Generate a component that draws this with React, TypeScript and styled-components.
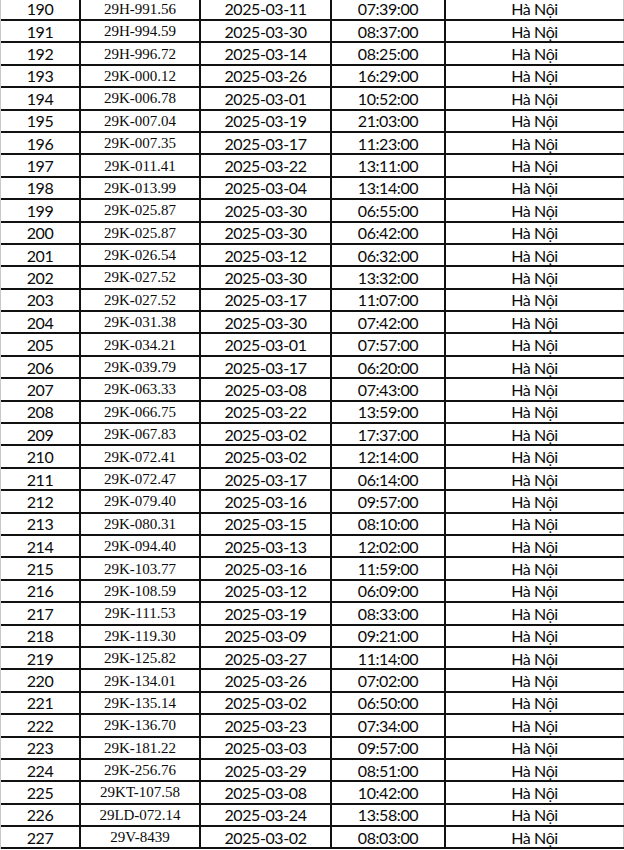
import React from "react";
import styled, { createGlobalStyle } from "styled-components";

const GlobalStyle = createGlobalStyle`
  html, body {
    margin: 0;
    padding: 0;
    background: #fff;
    overflow: hidden;
  }
`;

const Table = styled.div`
  width: 624px;
  margin-top: -1.4px;
  border-left: 1px solid #c8c8c8;
  box-sizing: border-box;
`;

const Row = styled.div`
  display: grid;
  grid-template-columns: 80px 120px 131px 114px 1fr;
  height: 22.4px;
  border-bottom: 2px solid #111;
  box-sizing: border-box;
`;

const Cell = styled.div<{ $serif?: boolean; $last?: boolean }>`
  display: flex;
  align-items: center;
  justify-content: center;
  border-right: ${(p) => (p.$last ? "1px solid #d0d0d0" : "2px solid #111")};
  color: #0a0a0a;
  font-family: ${(p) =>
    p.$serif ? '"Liberation Serif", "Times New Roman", serif' : "Lato, \"Open Sans\", sans-serif"};
  font-size: ${(p) => (p.$serif ? "15px" : "16px")};
  letter-spacing: ${(p) => (p.$serif ? "0" : "-0.4px")};
  line-height: 1;
  white-space: nowrap;
  padding-top: 1px;
`;

const rows: [number, string, string, string][] = [
  [190, "29H-991.56", "2025-03-11", "07:39:00"],
  [191, "29H-994.59", "2025-03-30", "08:37:00"],
  [192, "29H-996.72", "2025-03-14", "08:25:00"],
  [193, "29K-000.12", "2025-03-26", "16:29:00"],
  [194, "29K-006.78", "2025-03-01", "10:52:00"],
  [195, "29K-007.04", "2025-03-19", "21:03:00"],
  [196, "29K-007.35", "2025-03-17", "11:23:00"],
  [197, "29K-011.41", "2025-03-22", "13:11:00"],
  [198, "29K-013.99", "2025-03-04", "13:14:00"],
  [199, "29K-025.87", "2025-03-30", "06:55:00"],
  [200, "29K-025.87", "2025-03-30", "06:42:00"],
  [201, "29K-026.54", "2025-03-12", "06:32:00"],
  [202, "29K-027.52", "2025-03-30", "13:32:00"],
  [203, "29K-027.52", "2025-03-17", "11:07:00"],
  [204, "29K-031.38", "2025-03-30", "07:42:00"],
  [205, "29K-034.21", "2025-03-01", "07:57:00"],
  [206, "29K-039.79", "2025-03-17", "06:20:00"],
  [207, "29K-063.33", "2025-03-08", "07:43:00"],
  [208, "29K-066.75", "2025-03-22", "13:59:00"],
  [209, "29K-067.83", "2025-03-02", "17:37:00"],
  [210, "29K-072.41", "2025-03-02", "12:14:00"],
  [211, "29K-072.47", "2025-03-17", "06:14:00"],
  [212, "29K-079.40", "2025-03-16", "09:57:00"],
  [213, "29K-080.31", "2025-03-15", "08:10:00"],
  [214, "29K-094.40", "2025-03-13", "12:02:00"],
  [215, "29K-103.77", "2025-03-16", "11:59:00"],
  [216, "29K-108.59", "2025-03-12", "06:09:00"],
  [217, "29K-111.53", "2025-03-19", "08:33:00"],
  [218, "29K-119.30", "2025-03-09", "09:21:00"],
  [219, "29K-125.82", "2025-03-27", "11:14:00"],
  [220, "29K-134.01", "2025-03-26", "07:02:00"],
  [221, "29K-135.14", "2025-03-02", "06:50:00"],
  [222, "29K-136.70", "2025-03-23", "07:34:00"],
  [223, "29K-181.22", "2025-03-03", "09:57:00"],
  [224, "29K-256.76", "2025-03-29", "08:51:00"],
  [225, "29KT-107.58", "2025-03-08", "10:42:00"],
  [226, "29LD-072.14", "2025-03-24", "13:58:00"],
  [227, "29V-8439", "2025-03-02", "08:03:00"],
];

export default function App() {
  return (
    <>
      <GlobalStyle />
      <Table>
        {rows.map(([no, plate, date, time]) => (
          <Row key={no}>
            <Cell>{no}</Cell>
            <Cell $serif>{plate}</Cell>
            <Cell>{date}</Cell>
            <Cell>{time}</Cell>
            <Cell $last>Hà Nội</Cell>
          </Row>
        ))}
      </Table>
    </>
  );
}
